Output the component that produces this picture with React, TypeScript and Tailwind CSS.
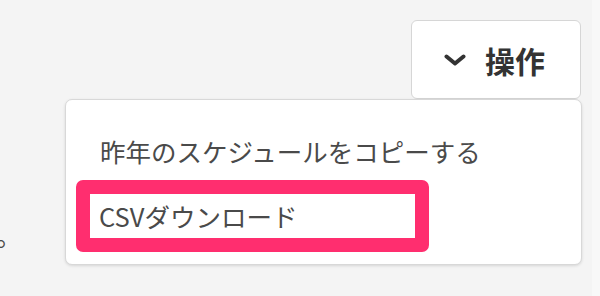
import React from "react";

const font = { fontFamily: '"Noto Sans CJK JP", "Noto Sans", sans-serif' };

export default function App() {
  return (
    <div className="flex w-[600px] h-[296px] overflow-hidden" style={font}>
      <div className="relative flex-1 flex flex-col bg-[#f4f4f4]">
        <div className="flex justify-end pt-[20px] pr-[11px]">
          <button className="flex items-center w-[170px] h-[79px] pl-[32px] bg-white border border-[#d6d6d6] rounded-[6px] text-[#333]">
            <svg width="22" height="12" viewBox="0 0 22 12" className="shrink-0">
              <polyline
                points="2.5,2.5 11,9.5 19.5,2.5"
                fill="none"
                stroke="#333"
                strokeWidth="4"
                strokeLinecap="round"
                strokeLinejoin="round"
              />
            </svg>
            <span className="ml-[19px] text-[30px] leading-none font-bold">操作</span>
          </button>
        </div>
        <p className="mt-[118px] ml-[-4px] text-[25.5px] leading-[36px] text-[#4a4a4a]">。</p>

        <div className="absolute left-[65px] top-[99px] w-[517px] h-[166px] bg-white border border-[#d8d8d8] rounded-[7px] shadow-[0_1px_3px_rgba(0,0,0,0.12)] flex flex-col">
          <div className="pl-[34px] pt-[33px] text-[25.5px] leading-[36px] text-[#4a4a4a]">
            昨年のスケジュールをコピーする
          </div>
          <div className="mt-[11px] ml-[10px] w-[353px] h-[72px] border-[14px] border-[#ff2e6f] rounded-[7px] flex items-center pl-[9px] text-[25.5px] leading-[36px] text-[#4a4a4a] bg-white">
            CSVダウンロード
          </div>
        </div>
      </div>
      <div className="w-[8px] bg-[#f8f8f8]" />
    </div>
  );
}
